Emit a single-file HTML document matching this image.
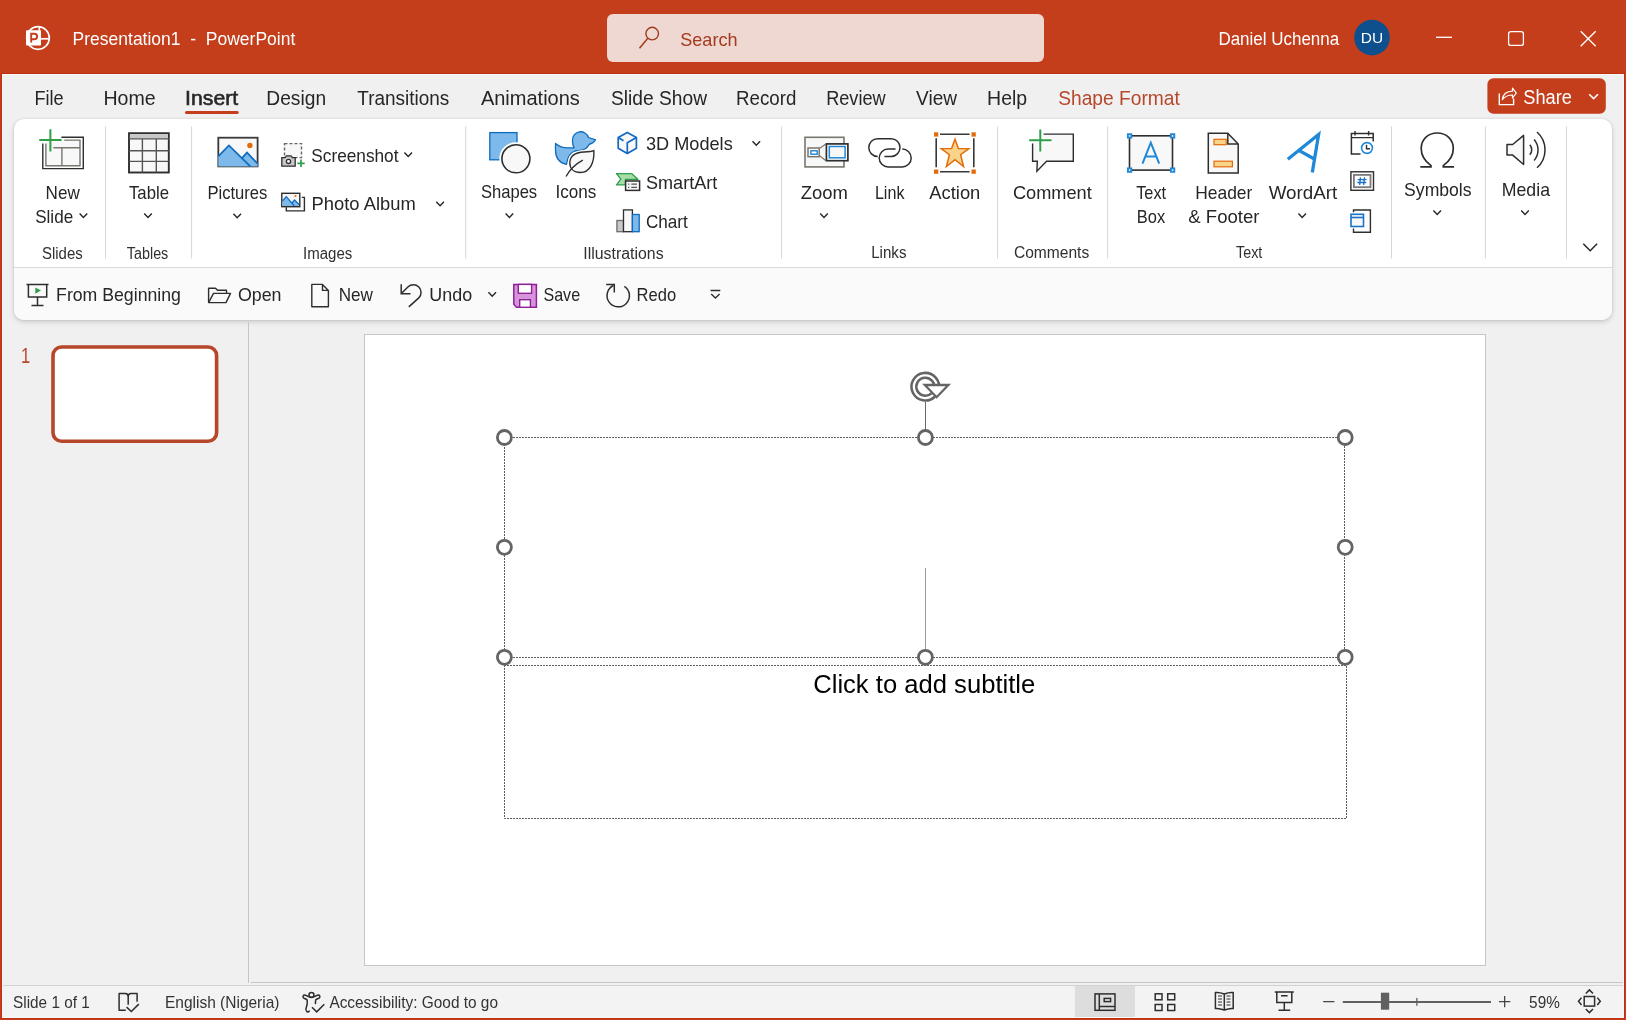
<!DOCTYPE html>
<html><head><meta charset="utf-8"><style>
html,body{margin:0;padding:0;}
body{width:1626px;height:1020px;overflow:hidden;background:#C43E1C;position:relative;font-family:"Liberation Sans",sans-serif;}
.a{position:absolute;}
svg{position:absolute;left:0;top:0;will-change:transform;}
svg text{font-family:"Liberation Sans",sans-serif;}
</style></head><body>
<div class="a" style="left:2px;top:74px;width:1622px;height:944px;background:#F0F0F0"></div>
<div class="a" style="left:14px;top:119px;width:1598px;height:201px;border-radius:10px;background:#FFFFFF;box-shadow:0 2px 5px rgba(0,0,0,0.16),0 0 2px rgba(0,0,0,0.12);overflow:hidden">
  <div class="a" style="left:0;top:148px;width:1598px;height:1px;background:#DADADA"></div>
  <div class="a" style="left:0;top:149px;width:1598px;height:52px;background:#FAFAFA"></div>
</div>
<div class="a" style="left:248px;top:322px;width:1px;height:661px;background:#C6C6C6"></div>
<div class="a" style="left:364px;top:334px;width:1120px;height:630px;border:1px solid #C6C6C6;background:#FFFFFF"></div>
<div class="a" style="left:251px;top:982px;width:1373px;height:1px;background:#C6C6C6"></div>
<div class="a" style="left:2px;top:985px;width:1622px;height:1px;background:#D2D2D2"></div>
<div class="a" style="left:2px;top:986px;width:1622px;height:32px;background:#F3F3F3"></div>
<div class="a" style="left:1075px;top:986px;width:60px;height:32px;background:#DDDDDD"></div>
<div class="a" style="left:1px;top:73px;width:1624px;height:1px;background:#BF3010"></div>
<div class="a" style="left:2px;top:74px;width:1622px;height:1px;background:#F4FAFA"></div>
<div class="a" style="left:1px;top:73px;width:1px;height:946px;background:#BF3010"></div>
<div class="a" style="left:2px;top:74px;width:1px;height:944px;background:#F4FAFA"></div>
<div class="a" style="left:1624px;top:73px;width:1px;height:946px;background:#BF3010"></div>
<div class="a" style="left:1623px;top:74px;width:1px;height:944px;background:#F4FAFA"></div>
<div class="a" style="left:1px;top:1018px;width:1624px;height:1px;background:#BF3010"></div>
<div class="a" style="left:2px;top:1017px;width:1622px;height:1px;background:#F4FAFA"></div>
<svg width="1626" height="1020" viewBox="0 0 1626 1020">
<g>
<circle cx="38" cy="38" r="11.3" fill="none" stroke="#fff" stroke-width="1.7"/>
<line x1="39.3" y1="26.5" x2="39.3" y2="38" stroke="#fff" stroke-width="1.7"/>
<line x1="39.3" y1="38.8" x2="49.5" y2="38.8" stroke="#fff" stroke-width="1.7"/>
<rect x="26" y="30.2" width="15" height="15.4" rx="1" fill="#fff"/>
<path d="M31.2 42.6 V33.8 H34.4 Q37.1 33.8 37.1 36.5 Q37.1 39.2 34.4 39.2 H31.2" fill="none" stroke="#C43E1C" stroke-width="1.9"/>
</g>
<rect x="607" y="14" width="437" height="48" rx="6" fill="#EFD8D2"/>
<circle cx="652.2" cy="33.6" r="6.3" fill="none" stroke="#A5391D" stroke-width="1.4"/><line x1="647.8" y1="38.2" x2="639.5" y2="48.3" stroke="#A5391D" stroke-width="1.5"/>
<circle cx="1372" cy="37.6" r="17.8" fill="#0E4F8E"/>
<line x1="1436" y1="37.3" x2="1452" y2="37.3" stroke="#fff" stroke-width="1.3"/>
<rect x="1508.6" y="31.6" width="14.8" height="13.8" rx="2.2" fill="none" stroke="#fff" stroke-width="1.3"/>
<path d="M1580.7 31.3 L1595.7 46.2 M1595.7 31.3 L1580.7 46.2" stroke="#fff" stroke-width="1.35"/>
<rect x="185" y="111" width="53.7" height="3" rx="1.5" fill="#C43E1C"/>
<rect x="1487.4" y="78.2" width="118.4" height="35.6" rx="6" fill="#C43E1C"/>
<path d="M1499.3 93.6 V104.6 H1513.6 V98.6" fill="none" stroke="#fff" stroke-width="1.4"/>
<path d="M1502.3 99.5 Q1503.5 91.5 1512.5 91.2 L1512.5 88 L1516.3 93.2 L1512.5 98 L1512.5 95 Q1506 95 1502.3 99.5 Z" fill="none" stroke="#fff" stroke-width="1.2" stroke-linejoin="round"/>
<path d="M1589.2 94.2 L1593.6 98.6 L1598 94.2" fill="none" stroke="#fff" stroke-width="1.5"/>
<path d="M79.60 213.60 L83.40 217.60 L87.20 213.60" fill="none" stroke="#262626" stroke-width="1.4"/>
<path d="M144.20 213.60 L148.00 217.60 L151.80 213.60" fill="none" stroke="#262626" stroke-width="1.4"/>
<path d="M233.40 213.80 L237.20 217.80 L241.00 213.80" fill="none" stroke="#262626" stroke-width="1.4"/>
<path d="M404.40 152.60 L408.20 156.60 L412.00 152.60" fill="none" stroke="#262626" stroke-width="1.4"/>
<path d="M436.30 201.80 L440.10 205.80 L443.90 201.80" fill="none" stroke="#262626" stroke-width="1.4"/>
<path d="M505.60 213.60 L509.40 217.60 L513.20 213.60" fill="none" stroke="#262626" stroke-width="1.4"/>
<path d="M752.50 141.30 L756.30 145.30 L760.10 141.30" fill="none" stroke="#262626" stroke-width="1.4"/>
<path d="M820.20 213.60 L824.00 217.60 L827.80 213.60" fill="none" stroke="#262626" stroke-width="1.4"/>
<path d="M1298.40 213.40 L1302.20 217.40 L1306.00 213.40" fill="none" stroke="#262626" stroke-width="1.4"/>
<path d="M1433.40 210.40 L1437.20 214.40 L1441.00 210.40" fill="none" stroke="#262626" stroke-width="1.4"/>
<path d="M1521.20 210.40 L1525.00 214.40 L1528.80 210.40" fill="none" stroke="#262626" stroke-width="1.4"/>
<path d="M1583.3 243.8 L1590.2 250.8 L1597.1 243.8" fill="none" stroke="#262626" stroke-width="1.5"/>
<rect x="105.1" y="126.4" width="1" height="132" fill="#D6D6D6"/>
<rect x="191.1" y="126.4" width="1" height="132" fill="#D6D6D6"/>
<rect x="465.2" y="126.4" width="1" height="132" fill="#D6D6D6"/>
<rect x="781.1" y="126.4" width="1" height="132" fill="#D6D6D6"/>
<rect x="997.1" y="126.4" width="1" height="132" fill="#D6D6D6"/>
<rect x="1107.1" y="126.4" width="1" height="132" fill="#D6D6D6"/>
<rect x="1391.0" y="126.4" width="1" height="132" fill="#D6D6D6"/>
<rect x="1484.9" y="126.4" width="1" height="132" fill="#D6D6D6"/>
<rect x="1565.9" y="126.4" width="1" height="132" fill="#D6D6D6"/>
<path d="M488.40 292.30 L492.20 296.30 L496.00 292.30" fill="none" stroke="#262626" stroke-width="1.4"/>
<g fill="none">
<rect x="45.9" y="140.1" width="34.1" height="25.7" fill="#F8F8F8" stroke="none"/>
<path d="M61.4 137.2 H83.3 V168.6 H42.8 V143.6" stroke="#2E2E2E" stroke-width="1.4"/>
<path d="M64.2 140.1 H80 V165.8 H45.9 V143.6" stroke="#7A7670" stroke-width="1.4"/>
<path d="M53.4 147.7 H80 M61.9 147.7 V165.8" stroke="#7A7670" stroke-width="1.4"/>
<path d="M39.3 140.1 H61.6 M50.4 129.3 V151.4" stroke="#2E9E48" stroke-width="2"/>
</g>
<g fill="none">
<rect x="129" y="133.2" width="39.8" height="39.3" fill="#F8F8F8" stroke="#2E2E2E" stroke-width="1.9"/>
<rect x="129.9" y="134.1" width="38" height="4.6" fill="#C8C8C8"/>
<path d="M129 138.9 H168.8 M129 150.8 H168.8 M129 161.4 H168.8 M142.4 138.9 V172.5 M156.3 138.9 V172.5" stroke="#555" stroke-width="1.4"/>
</g>
<g>
<rect x="218.3" y="137.7" width="39.3" height="28.7" fill="#F8F8F8" stroke="#3A3A3A" stroke-width="1.8"/>
<path d="M218.3 156.3 L228.9 145.4 L250.3 166.4 H218.3 Z" fill="#7DB9EA"/>
<path d="M242.2 157.9 L247 152.6 L257.6 163.8 V166.4 H250.3 Z" fill="#7DB9EA"/>
<path d="M218.3 156.3 L228.9 145.4 L250.3 166.4 M242.2 157.9 L247 152.6 L257.6 163.6" fill="none" stroke="#0F6CBD" stroke-width="1.7"/>
<circle cx="249.9" cy="145.4" r="2.7" fill="#E36C0A"/>
</g>
<g>
<rect x="284.5" y="143.6" width="17" height="14" fill="#F8F8F8" stroke="#666" stroke-width="1.4" stroke-dasharray="3 2"/>
<path d="M281.8 157.6 H285 L286.5 155.8 H291 L292.5 157.6 H295.2 V166.2 H281.8 Z" fill="#C8C8C8" stroke="#2E2E2E" stroke-width="1.3"/>
<circle cx="288.5" cy="161.4" r="2.1" fill="#fff" stroke="#2E2E2E" stroke-width="1.3"/>
<path d="M297.4 163.3 H304.7 M301 159.6 V166.9" stroke="#2E9E48" stroke-width="1.7"/>
</g>
<g>
<path d="M286.3 207.3 V210.9 H304.4 V197.4 H301.8" fill="none" stroke="#2E2E2E" stroke-width="1.4"/>
<rect x="281.8" y="193.3" width="18" height="13.4" fill="#F8F8F8" stroke="#2E2E2E" stroke-width="1.4"/>
<path d="M282.5 201 L286.3 196.7 L294.3 206 H282.5 Z M292 203 L294.5 200 L299 204.5 V206 H294.3 Z" fill="#7DB9EA"/>
<path d="M282.5 201 L286.3 196.7 L294.3 206 M292 203 L294.5 200 L299 204.5" fill="none" stroke="#0F6CBD" stroke-width="1.2"/>
<circle cx="295.5" cy="196" r="1.1" fill="#E36C0A"/>
</g>
<g>
<rect x="489.8" y="132.6" width="27.2" height="27.2" fill="#7DB9EA" stroke="#0F6CBD" stroke-width="1.3"/>
<circle cx="515.9" cy="158.8" r="16.6" fill="#fff"/>
<circle cx="515.9" cy="158.8" r="14" fill="#F8F8F8" stroke="#2E2E2E" stroke-width="1.6"/>
</g>
<g>
<path d="M555.5 143.5 Q561 148.5 570.5 147.8 L574 147.8 Q572.5 145 572.5 140.5 A8.2 8.2 0 0 1 588.5 137.5 L595.6 139.8 Q593.5 143.5 589 144.5 Q587 149.5 580 150.5 L575 151 Q568 153 566.5 164.4 Q555.5 162 555.5 150 Z" fill="#7DB9EA" stroke="#0F6CBD" stroke-width="1.3" stroke-linejoin="round"/>
<path d="M593.8 150.6 C594.6 162 590 172.5 580.5 172.5 C573.5 172.5 569.8 168.5 569.8 163 C569.8 155.5 576.5 152.4 584 152 C588 151.8 591.5 151.6 593.8 150.6 Z" fill="#fff" stroke="#fff" stroke-width="4"/>
<path d="M593.8 150.6 C594.6 162 590 172.5 580.5 172.5 C573.5 172.5 569.8 168.5 569.8 163 C569.8 155.5 576.5 152.4 584 152 C588 151.8 591.5 151.6 593.8 150.6 Z" fill="#F8F8F8" stroke="#2E2E2E" stroke-width="1.4"/>
<path d="M566 176.5 Q572 166 582.8 160.2" fill="none" stroke="#2E2E2E" stroke-width="1.4"/>
</g>
<g fill="none" stroke="#1268C2" stroke-width="1.7" stroke-linejoin="round">
<path d="M627.3 132.4 L636.4 137.6 V148.3 L627.3 153.4 L618.2 148.3 V137.6 Z" fill="#F8F8F8"/>
<path d="M627.3 153.4 V142.8 L636.4 137.6 M618.3 137.5 L623.5 140.7"/>
</g>
<g>
<path d="M616.5 173.6 H631.6 L638 179.5 H625.5 V184.8 H616.5 L620.8 179.2 Z" fill="#A8DCA8" stroke="#2E9E48" stroke-width="1.3" stroke-linejoin="round"/>
<rect x="625.6" y="181" width="14" height="9.4" fill="#F8F8F8" stroke="#2E2E2E" stroke-width="1.5"/>
<path d="M628 184.2 H629.3 M631.3 184.2 H637 M628 187.3 H629.3 M631.3 187.3 H637" stroke="#555" stroke-width="1.2"/>
</g>
<g stroke-width="1.3">
<rect x="616.9" y="220.5" width="6.6" height="11.2" fill="#C8C8C8" stroke="#6E6E6E"/>
<rect x="623.5" y="209.9" width="8.9" height="21.8" fill="#F8F8F8" stroke="#2E2E2E"/>
<rect x="632.4" y="214.5" width="6.8" height="17.2" fill="#7DB9EA" stroke="#0F6CBD"/>
</g>
<g>
<rect x="805" y="137.3" width="39" height="29.6" fill="#F8F8F8" stroke="#7A7670" stroke-width="1.6"/>
<path d="M819.3 148.5 L825.6 144.2 M819.3 155.6 L825.6 160.4" stroke="#7A7670" stroke-width="1.2"/>
<rect x="808" y="148" width="11.2" height="8.7" fill="#fff" stroke="#7A7670" stroke-width="1.5"/>
<rect x="810.9" y="150.8" width="6.3" height="3.4" fill="none" stroke="#1F88D8" stroke-width="1.4"/>
<rect x="826.4" y="143.9" width="21.5" height="16.8" fill="#fff" stroke="#2E2E2E" stroke-width="1.7"/>
<rect x="829.3" y="146.5" width="15.8" height="11.3" fill="#F8F8F8" stroke="#1F88D8" stroke-width="1.5"/>
</g>
<g fill="none" stroke="#2E2E2E" stroke-width="1.5">
<path d="M877.7 156.5 A8.92 8.92 0 0 1 877.7 138.66 H891.1 A8.92 8.92 0 0 1 891.1 156.5 H884.4"/>
<path d="M895.55 149.1 H888.1 A8.9 8.9 0 0 0 888.1 166.9 H902.3 A8.9 8.9 0 0 0 902.3 149.1"/>
</g>
<g>
<path d="M940 134.2 H969.6 M940 171.7 H969.6 M936.2 138.3 V167.3 M973.8 138.3 V167.3" stroke="#383838" stroke-width="1.6"/>
<rect x="934" y="132.3" width="4.3" height="4.3" fill="#E36C0A"/>
<rect x="971.5" y="132.3" width="4.3" height="4.3" fill="#E36C0A"/>
<rect x="934" y="169.5" width="4.3" height="4.3" fill="#E36C0A"/>
<rect x="971.5" y="169.5" width="4.3" height="4.3" fill="#E36C0A"/>
<path d="M955 139.2 L958.4 148.4 L968.8 148.6 L960.6 154.7 L963.6 166.6 L955 159.7 L946.4 166.6 L949.4 154.7 L941.2 148.6 L951.6 148.4 Z" fill="#F8D38A" stroke="#E36C0A" stroke-width="1.5" stroke-linejoin="miter"/>
</g>
<g>
<path d="M1043.6 134.1 H1073.3 V161.3 H1046.6 L1036.9 171.2 L1037.3 161.3 H1032.6 V143.4" fill="#F8F8F8" stroke="#2E2E2E" stroke-width="1.4"/>
<path d="M1029.2 140.3 H1051.5 M1040.3 129.4 V151.5" stroke="#fff" stroke-width="5"/>
<path d="M1029.2 140.3 H1051.5 M1040.3 129.4 V151.5" stroke="#2E9E48" stroke-width="2"/>
</g>
<g>
<rect x="1129.5" y="135.8" width="43" height="34.3" fill="#F8F8F8" stroke="#2E2E2E" stroke-width="1.6"/>
<path d="M1142.5 163.6 L1150.8 142.6 L1159.2 163.6 M1145.3 156.6 H1156.3" fill="none" stroke="#1F88D8" stroke-width="2"/>
<rect x="1127.9" y="134.2" width="3.4" height="3.4" fill="#fff" stroke="#1F88D8" stroke-width="1.9"/>
<rect x="1170.9" y="134.2" width="3.4" height="3.4" fill="#fff" stroke="#1F88D8" stroke-width="1.9"/>
<rect x="1127.9" y="168.4" width="3.4" height="3.4" fill="#fff" stroke="#1F88D8" stroke-width="1.9"/>
<rect x="1170.9" y="168.4" width="3.4" height="3.4" fill="#fff" stroke="#1F88D8" stroke-width="1.9"/>
</g>
<g>
<path d="M1208.3 133.3 H1227.8 L1238.2 144 V173 H1208.3 Z" fill="#F8F8F8" stroke="#2E2E2E" stroke-width="1.5"/>
<path d="M1227.8 133.3 V144 H1238.2" fill="none" stroke="#2E2E2E" stroke-width="1.5"/>
<rect x="1214" y="139.3" width="12.2" height="5.4" fill="#F8D38A" stroke="#E36C0A" stroke-width="1.2"/>
<rect x="1214" y="161.2" width="18.4" height="5.6" fill="#F8D38A" stroke="#E36C0A" stroke-width="1.2"/>
</g>
<path d="M1287.8 159.3 L1318.6 134.5 L1312.3 172.6 M1299.3 150.6 L1314.3 159" fill="none" stroke="#1F88D8" stroke-width="3.3" stroke-linejoin="miter"/>
<g fill="none">
<path d="M1373.2 141.5 V133.6 H1351.4 V154 H1360.5" stroke="#2E2E2E" stroke-width="1.5"/>
<path d="M1351.4 137.6 H1373.2 M1355 131.1 V135.4 M1368.6 131.1 V135.4" stroke="#2E2E2E" stroke-width="1.4"/>
<circle cx="1367" cy="148" r="6.9" fill="#fff"/>
<circle cx="1367" cy="148" r="5.4" fill="#fff" stroke="#1F88D8" stroke-width="1.6"/>
<path d="M1366.5 144.8 V148.7 H1370" stroke="#2E2E2E" stroke-width="1.4"/>
<rect x="1350.9" y="171.8" width="22.6" height="18.5" stroke="#2E2E2E" stroke-width="1.4"/>
<rect x="1353.9" y="174.9" width="16.6" height="12.3" stroke="#7A7A7A" stroke-width="1.8"/>
<path d="M1360.5 177.3 L1359.6 184.8 M1364.5 177.3 L1363.6 184.8 M1357.8 179.6 H1366.6 M1357.4 182.5 H1366.2" stroke="#1A73C9" stroke-width="1.4"/>
<path d="M1353.5 212.3 V210 H1370.4 V232.2 H1353.5 V228.5" stroke="#2E2E2E" stroke-width="1.4"/>
<rect x="1351" y="214.3" width="12.5" height="12.2" fill="#F8F8F8" stroke="#1A73C9" stroke-width="1.6"/>
<path d="M1351 217.5 H1363.5" stroke="#1A73C9" stroke-width="1.6"/>
</g>
<path d="M1420.3 166.8 H1431 V165.6 C1424.5 161 1421.2 155.5 1421.2 148.5 C1421.2 139.5 1428 133 1437.2 133 C1446.4 133 1453.3 139.5 1453.3 148.5 C1453.3 155.5 1449.8 161 1443.3 165.6 V166.8 H1454.1" fill="none" stroke="#2E2E2E" stroke-width="1.7"/>
<g fill="none" stroke="#2E2E2E" stroke-width="1.5" stroke-linejoin="round">
<path d="M1507 144.5 H1512.7 L1523.6 135.4 V164.5 L1512.7 155.1 H1507 Z" fill="#F8F8F8"/>
<path d="M1529.8 144.75 A7.5 7.5 0 0 1 1529.8 154.8"/>
<path d="M1534.1 139.5 A15.9 15.9 0 0 1 1534.1 160.4"/>
<path d="M1537 132 A24 24 0 0 1 1537 167.8"/>
</g>
<g fill="none" stroke="#2E2E2E" stroke-width="1.5">
<path d="M26.5 284.5 H48.5 M28.4 284.5 V297 H46.7 V284.5 M37.5 297 V305.5 M31.5 305.6 H43.5"/>
</g>
<path d="M35.3 287.5 L41 290.6 L35.3 293.8 Z" fill="#2E9E48"/>
<g fill="none" stroke="#2E2E2E" stroke-width="1.4" stroke-linejoin="round">
<path d="M208.6 302.6 V288.2 H215.5 L217.5 290.3 H226.5 V293.4"/>
<path d="M208.6 302.6 L213.5 293.4 H230.5 L226 302.6 Z"/>
</g>
<path d="M311.8 284.4 H322.5 L328.4 290.4 V306.7 H311.8 Z M322.5 284.4 V290.4 H328.4" fill="none" stroke="#2E2E2E" stroke-width="1.4" stroke-linejoin="round"/>
<path d="M401.2 284.3 V293.7 H410.5 M401.6 293.3 L407.9 287 A7.7 7.7 0 0 1 418.8 297.9 L408.8 306.9" fill="none" stroke="#2E2E2E" stroke-width="1.5"/>
<g>
<path d="M513.8 284.4 H536.4 V307.3 H516.5 L513.8 304.3 Z" fill="#D794DB" stroke="#8E2399" stroke-width="1.5"/>
<rect x="518.3" y="284.4" width="13.3" height="8.9" fill="#fff" stroke="#8E2399" stroke-width="1.4"/>
<rect x="519.7" y="299.7" width="10.7" height="7.6" fill="#fff" stroke="#8E2399" stroke-width="1.4"/>
</g>
<path d="M624.4 286.3 A11.2 11.2 0 1 1 613.5 285.5" fill="none" stroke="#2E2E2E" stroke-width="1.5"/>
<path d="M606.2 284.6 H614.3 V292.6" fill="none" stroke="#2E2E2E" stroke-width="1.5"/>
<path d="M710.5 290.5 H720.3 M711.2 294 L715.4 298 L719.6 294" fill="none" stroke="#2E2E2E" stroke-width="1.4"/>

<rect x="53" y="347" width="163.6" height="94.2" rx="8.5" fill="#fff" stroke="#B7472A" stroke-width="3.6"/>
<g fill="none" stroke="#5C5C5C" stroke-width="1" stroke-dasharray="2 1" stroke-dashoffset="0.5">
<rect x="504.5" y="437.5" width="840" height="220"/>
<rect x="504.5" y="665.5" width="842" height="153"/>
</g>
<line x1="925.5" y1="568" x2="925.5" y2="650" stroke="#9A9A9A" stroke-width="1"/>
<line x1="925.5" y1="402" x2="925.5" y2="431" stroke="#6A6A6A" stroke-width="1"/>
<circle cx="504.4" cy="437.5" r="7" fill="#fff" stroke="#646464" stroke-width="2.8"/>
<circle cx="925.4" cy="437.5" r="7" fill="#fff" stroke="#646464" stroke-width="2.8"/>
<circle cx="1345.2" cy="437.5" r="7" fill="#fff" stroke="#646464" stroke-width="2.8"/>
<circle cx="504.4" cy="547.3" r="7" fill="#fff" stroke="#646464" stroke-width="2.8"/>
<circle cx="1345.2" cy="547.3" r="7" fill="#fff" stroke="#646464" stroke-width="2.8"/>
<circle cx="504.4" cy="657.3" r="7" fill="#fff" stroke="#646464" stroke-width="2.8"/>
<circle cx="925.4" cy="657.3" r="7" fill="#fff" stroke="#646464" stroke-width="2.8"/>
<circle cx="1345.2" cy="657.3" r="7" fill="#fff" stroke="#646464" stroke-width="2.8"/>
<path d="M933.36 394.76 A11.4 11.4 0 1 1 936.45 389.07" fill="none" stroke="#646464" stroke-width="7.4"/>
<path d="M933.36 394.76 A11.4 11.4 0 1 1 936.45 389.07" fill="none" stroke="#fff" stroke-width="2.3"/>
<path d="M924.8 385 H948.4 L936.6 397.2 Z" fill="#fff" stroke="#646464" stroke-width="2.3" stroke-linejoin="miter"/>

<g fill="none" stroke="#2E2E2E" stroke-width="1.5" stroke-linejoin="round">
<path d="M125.8 1010.2 H119.1 V993.5 H125.5 Q128.2 993.5 128.2 997 V1004.8 M128.2 997 Q128.2 993.5 131 993.5 H137.1 V1001.7"/>
<path d="M126.6 1007.1 L131.3 1011.5 L138.8 1004.1" stroke-linejoin="miter"/>
</g>
<g fill="none" stroke="#2E2E2E" stroke-width="1.5" stroke-linecap="round" stroke-linejoin="round">
<circle cx="311.45" cy="994.9" r="2.5"/>
<path d="M309.25 1011 Q308.2 1012.4 306.8 1011.5 Q305.4 1010.5 306 1008.6 L307.2 1004 V1000.2 Q307 999.6 306.3 999.3 L304 998.3 Q302.6 997.5 303.1 996.1 Q303.8 994.6 305.5 995.3 L308.5 996.6 Q311.4 997.8 314.3 996.6 L317.4 995.3 Q319.1 994.6 319.8 996.1 Q320.3 997.5 318.9 998.3 L316.5 999.3 Q315.6 999.7 315.6 1000.5 L315.4 1003.6"/>
<path d="M312 1007.2 L316.7 1011.9 L324.3 1004.2" stroke-linecap="butt" stroke-linejoin="miter"/>
</g>
<g fill="none" stroke="#2E2E2E" stroke-width="1.5">
<rect x="1095" y="993.9" width="20" height="16.4"/>
<path d="M1099.3 993.9 V1010.3 M1099.3 1006.5 H1115"/>
<rect x="1104.2" y="998.4" width="6.4" height="3.2"/>
<rect x="1155.2" y="993.8" width="6.8" height="6"/><rect x="1167.7" y="993.8" width="7" height="6"/>
<rect x="1155.2" y="1004.5" width="6.8" height="6"/><rect x="1167.7" y="1004.5" width="7" height="6"/>
<path d="M1224.3 994 Q1219 992 1215.4 992.6 V1008.5 Q1219 1008 1224.3 1010 Q1229.5 1008 1233.2 1008.5 V992.6 Q1229.5 992 1224.3 994 Z M1224.3 994 V1010"/>
<path d="M1218 996 H1222 M1218 999 H1222 M1218 1002 H1222 M1218 1005 H1222 M1226.5 996 H1230.5 M1226.5 999 H1230.5 M1226.5 1002 H1230.5 M1226.5 1005 H1230.5" stroke-width="1"/>
<path d="M1274.8 991.9 H1293.8 M1276.8 991.9 V1002.4 H1291.8 V991.9 M1284.3 1002.4 V1010.2 M1278.5 1010.2 H1290.2 M1281 995.7 H1287.6"/>
</g>
<g>
<path d="M1323.2 1001.6 H1334.4 M1499 1001.6 H1510.3 M1504.65 996 V1007.2" stroke="#444" stroke-width="1.3"/>
<rect x="1342.8" y="1001" width="148.2" height="2" fill="#606060"/>
<rect x="1380.9" y="992.7" width="8.3" height="17" fill="#606060"/>
<rect x="1416.2" y="997.9" width="1.3" height="7.9" fill="#606060"/>
</g>
<g fill="none" stroke="#2E2E2E" stroke-width="1.5">
<rect x="1584.2" y="996.5" width="10.4" height="9.6"/>
<path d="M1585.8 993.5 L1589.4 989.9 L1593 993.5 M1585.8 1009 L1589.4 1012.6 L1593 1009 M1581.5 997.6 L1578.5 1001.3 L1581.5 1005 M1597.3 997.6 L1600.3 1001.3 L1597.3 1005"/>
</g>
<text x="72.60" y="44.80" font-size="18.5" fill="#FFFFFF" font-weight="400" textLength="222.70" lengthAdjust="spacingAndGlyphs" xml:space="preserve">Presentation1  -  PowerPoint</text>
<text x="680.20" y="45.90" font-size="19" fill="#A5391D" font-weight="400" textLength="57.41" lengthAdjust="spacingAndGlyphs" xml:space="preserve">Search</text>
<text x="1218.40" y="44.60" font-size="18" fill="#FFFFFF" font-weight="400" textLength="120.78" lengthAdjust="spacingAndGlyphs" xml:space="preserve">Daniel Uchenna</text>
<text x="1360.81" y="43.30" font-size="15.5" fill="#FFFFFF" font-weight="400">DU</text>
<text x="34.40" y="105.00" font-size="19.9" fill="#262626" font-weight="400" textLength="29.21" lengthAdjust="spacingAndGlyphs" xml:space="preserve">File</text>
<text x="103.40" y="105.00" font-size="19.9" fill="#262626" font-weight="400" textLength="52.19" lengthAdjust="spacingAndGlyphs" xml:space="preserve">Home</text>
<text x="266.30" y="105.00" font-size="19.9" fill="#262626" font-weight="400" textLength="59.80" lengthAdjust="spacingAndGlyphs" xml:space="preserve">Design</text>
<text x="357.30" y="105.00" font-size="19.9" fill="#262626" font-weight="400" textLength="91.99" lengthAdjust="spacingAndGlyphs" xml:space="preserve">Transitions</text>
<text x="480.90" y="105.00" font-size="19.9" fill="#262626" font-weight="400" textLength="99.00" lengthAdjust="spacingAndGlyphs" xml:space="preserve">Animations</text>
<text x="611.00" y="105.00" font-size="19.9" fill="#262626" font-weight="400" textLength="96.04" lengthAdjust="spacingAndGlyphs" xml:space="preserve">Slide Show</text>
<text x="736.10" y="105.00" font-size="19.9" fill="#262626" font-weight="400" textLength="60.29" lengthAdjust="spacingAndGlyphs" xml:space="preserve">Record</text>
<text x="826.20" y="105.00" font-size="19.9" fill="#262626" font-weight="400" textLength="59.44" lengthAdjust="spacingAndGlyphs" xml:space="preserve">Review</text>
<text x="916.10" y="105.00" font-size="19.9" fill="#262626" font-weight="400" textLength="40.95" lengthAdjust="spacingAndGlyphs" xml:space="preserve">View</text>
<text x="987.10" y="105.00" font-size="19.9" fill="#262626" font-weight="400" textLength="40.09" lengthAdjust="spacingAndGlyphs" xml:space="preserve">Help</text>
<text x="185.10" y="105.00" font-size="19.9" fill="#262626" font-weight="400" textLength="53.10" lengthAdjust="spacingAndGlyphs" xml:space="preserve" stroke="#262626" stroke-width="0.55">Insert</text>
<text x="1058.20" y="105.00" font-size="19.9" fill="#B7472A" font-weight="400" textLength="121.61" lengthAdjust="spacingAndGlyphs" xml:space="preserve">Shape Format</text>
<text x="1523.30" y="104.10" font-size="19.5" fill="#FFFFFF" font-weight="400" textLength="48.61" lengthAdjust="spacingAndGlyphs" xml:space="preserve">Share</text>
<text x="45.60" y="198.90" font-size="18.6" fill="#262626" font-weight="400" textLength="34.16" lengthAdjust="spacingAndGlyphs" xml:space="preserve">New</text>
<text x="35.20" y="222.80" font-size="18.6" fill="#262626" font-weight="400" textLength="37.99" lengthAdjust="spacingAndGlyphs" xml:space="preserve">Slide</text>
<text x="129.00" y="198.90" font-size="18.6" fill="#262626" font-weight="400" textLength="39.99" lengthAdjust="spacingAndGlyphs" xml:space="preserve">Table</text>
<text x="207.40" y="198.60" font-size="18.6" fill="#262626" font-weight="400" textLength="59.91" lengthAdjust="spacingAndGlyphs" xml:space="preserve">Pictures</text>
<text x="311.30" y="162.00" font-size="18.6" fill="#262626" font-weight="400" textLength="87.19" lengthAdjust="spacingAndGlyphs" xml:space="preserve">Screenshot</text>
<text x="311.60" y="209.80" font-size="18.6" fill="#262626" font-weight="400" textLength="104.11" lengthAdjust="spacingAndGlyphs" xml:space="preserve">Photo Album</text>
<text x="480.90" y="198.40" font-size="18.6" fill="#262626" font-weight="400" textLength="56.29" lengthAdjust="spacingAndGlyphs" xml:space="preserve">Shapes</text>
<text x="555.50" y="198.40" font-size="18.6" fill="#262626" font-weight="400" textLength="40.80" lengthAdjust="spacingAndGlyphs" xml:space="preserve">Icons</text>
<text x="646.00" y="149.60" font-size="18.6" fill="#262626" font-weight="400" textLength="86.70" lengthAdjust="spacingAndGlyphs" xml:space="preserve">3D Models</text>
<text x="646.00" y="188.50" font-size="18.6" fill="#262626" font-weight="400" textLength="71.30" lengthAdjust="spacingAndGlyphs" xml:space="preserve">SmartArt</text>
<text x="646.00" y="227.90" font-size="18.6" fill="#262626" font-weight="400" textLength="41.81" lengthAdjust="spacingAndGlyphs" xml:space="preserve">Chart</text>
<text x="800.80" y="198.70" font-size="18.6" fill="#262626" font-weight="400" textLength="47.10" lengthAdjust="spacingAndGlyphs" xml:space="preserve">Zoom</text>
<text x="874.90" y="198.70" font-size="18.6" fill="#262626" font-weight="400" textLength="29.58" lengthAdjust="spacingAndGlyphs" xml:space="preserve">Link</text>
<text x="929.30" y="198.70" font-size="18.6" fill="#262626" font-weight="400" textLength="51.01" lengthAdjust="spacingAndGlyphs" xml:space="preserve">Action</text>
<text x="1012.90" y="198.70" font-size="18.6" fill="#262626" font-weight="400" textLength="78.89" lengthAdjust="spacingAndGlyphs" xml:space="preserve">Comment</text>
<text x="1136.20" y="198.60" font-size="18.6" fill="#262626" font-weight="400" textLength="29.90" lengthAdjust="spacingAndGlyphs" xml:space="preserve">Text</text>
<text x="1136.80" y="222.70" font-size="18.6" fill="#262626" font-weight="400" textLength="28.40" lengthAdjust="spacingAndGlyphs" xml:space="preserve">Box</text>
<text x="1195.20" y="198.60" font-size="18.6" fill="#262626" font-weight="400" textLength="57.10" lengthAdjust="spacingAndGlyphs" xml:space="preserve">Header</text>
<text x="1188.30" y="222.70" font-size="18.6" fill="#262626" font-weight="400" textLength="71.20" lengthAdjust="spacingAndGlyphs" xml:space="preserve">&amp; Footer</text>
<text x="1268.70" y="198.60" font-size="18.6" fill="#262626" font-weight="400" textLength="68.50" lengthAdjust="spacingAndGlyphs" xml:space="preserve">WordArt</text>
<text x="1404.10" y="196.00" font-size="18.6" fill="#262626" font-weight="400" textLength="67.49" lengthAdjust="spacingAndGlyphs" xml:space="preserve">Symbols</text>
<text x="1501.80" y="196.00" font-size="18.6" fill="#262626" font-weight="400" textLength="48.18" lengthAdjust="spacingAndGlyphs" xml:space="preserve">Media</text>
<text x="42.00" y="258.60" font-size="15.6" fill="#303030" font-weight="400" textLength="40.69" lengthAdjust="spacingAndGlyphs" xml:space="preserve">Slides</text>
<text x="126.80" y="258.60" font-size="15.6" fill="#303030" font-weight="400" textLength="41.49" lengthAdjust="spacingAndGlyphs" xml:space="preserve">Tables</text>
<text x="303.00" y="258.90" font-size="15.6" fill="#303030" font-weight="400" textLength="49.30" lengthAdjust="spacingAndGlyphs" xml:space="preserve">Images</text>
<text x="583.30" y="258.80" font-size="15.6" fill="#303030" font-weight="400" textLength="80.29" lengthAdjust="spacingAndGlyphs" xml:space="preserve">Illustrations</text>
<text x="871.20" y="258.40" font-size="15.6" fill="#303030" font-weight="400" textLength="35.31" lengthAdjust="spacingAndGlyphs" xml:space="preserve">Links</text>
<text x="1013.90" y="258.40" font-size="15.6" fill="#303030" font-weight="400" textLength="75.29" lengthAdjust="spacingAndGlyphs" xml:space="preserve">Comments</text>
<text x="1236.00" y="258.40" font-size="15.6" fill="#303030" font-weight="400" textLength="26.30" lengthAdjust="spacingAndGlyphs" xml:space="preserve">Text</text>
<text x="56.10" y="300.80" font-size="18.6" fill="#262626" font-weight="400" textLength="124.80" lengthAdjust="spacingAndGlyphs" xml:space="preserve">From Beginning</text>
<text x="237.90" y="300.80" font-size="18.6" fill="#262626" font-weight="400" textLength="43.61" lengthAdjust="spacingAndGlyphs" xml:space="preserve">Open</text>
<text x="338.70" y="300.80" font-size="18.6" fill="#262626" font-weight="400" textLength="34.26" lengthAdjust="spacingAndGlyphs" xml:space="preserve">New</text>
<text x="429.30" y="300.80" font-size="18.6" fill="#262626" font-weight="400" textLength="42.79" lengthAdjust="spacingAndGlyphs" xml:space="preserve">Undo</text>
<text x="543.40" y="300.80" font-size="18.6" fill="#262626" font-weight="400" textLength="36.71" lengthAdjust="spacingAndGlyphs" xml:space="preserve">Save</text>
<text x="636.60" y="300.80" font-size="18.6" fill="#262626" font-weight="400" textLength="39.49" lengthAdjust="spacingAndGlyphs" xml:space="preserve">Redo</text>
<text x="13.10" y="1007.70" font-size="16.2" fill="#333333" font-weight="400" textLength="76.61" lengthAdjust="spacingAndGlyphs" xml:space="preserve">Slide 1 of 1</text>
<text x="165.00" y="1007.70" font-size="16.2" fill="#333333" font-weight="400" textLength="114.49" lengthAdjust="spacingAndGlyphs" xml:space="preserve">English (Nigeria)</text>
<text x="329.40" y="1007.50" font-size="16.2" fill="#333333" font-weight="400" textLength="168.60" lengthAdjust="spacingAndGlyphs" xml:space="preserve">Accessibility: Good to go</text>
<text x="1529.10" y="1007.80" font-size="16.2" fill="#333333" font-weight="400" textLength="30.71" lengthAdjust="spacingAndGlyphs" xml:space="preserve">59%</text>
<text x="21.10" y="363.00" font-size="21.5" fill="#B7472A" font-weight="400" textLength="9.20" lengthAdjust="spacingAndGlyphs" xml:space="preserve">1</text>
<text x="813.20" y="692.50" font-size="26.3" fill="#000000" font-weight="400" textLength="222.10" lengthAdjust="spacingAndGlyphs" xml:space="preserve">Click to add subtitle</text>
</svg>
</body></html>
